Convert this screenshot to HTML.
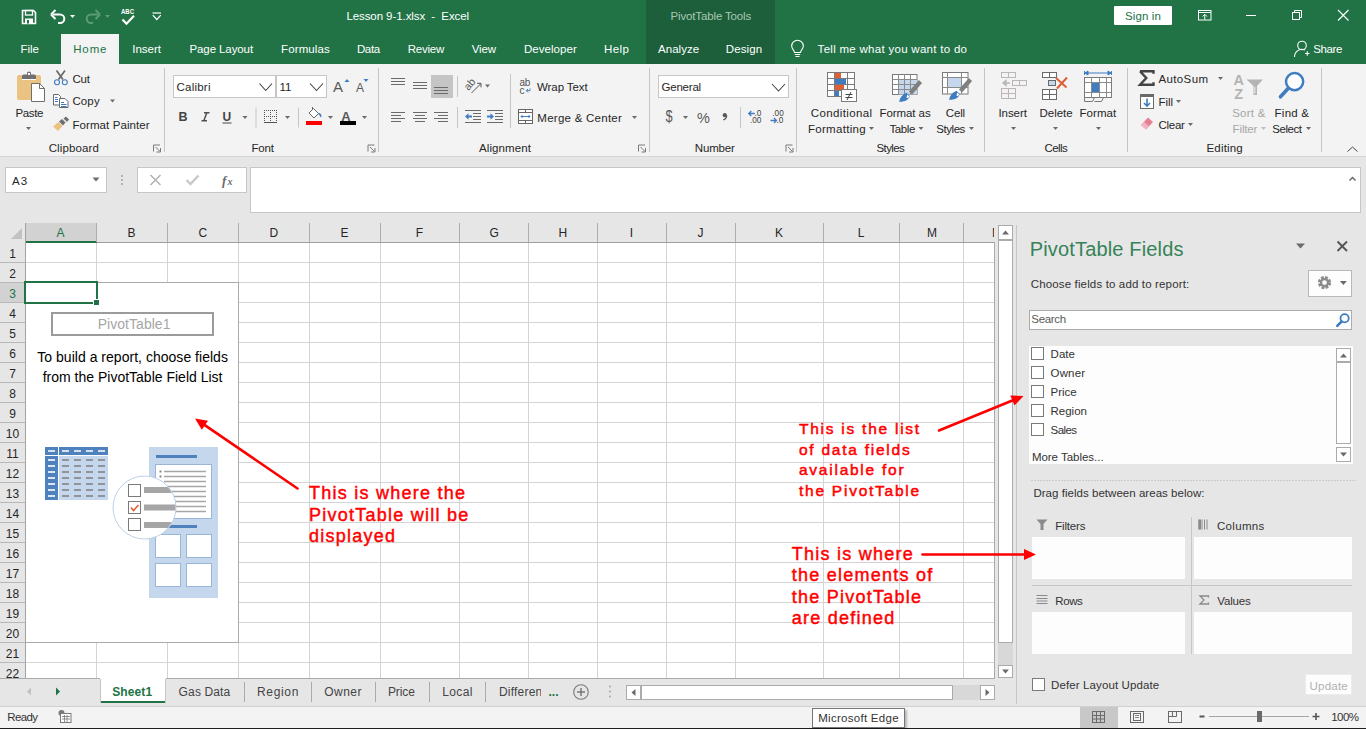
<!DOCTYPE html><html><head><meta charset="utf-8"><style>
html,body{margin:0;padding:0;}
body{width:1366px;height:729px;position:relative;overflow:hidden;background:#e6e6e6;font-family:"Liberation Sans",sans-serif;}
.t{position:absolute;white-space:pre;line-height:1;}
.r{position:absolute;box-sizing:border-box;}
.s{position:absolute;overflow:visible;}
</style></head><body>
<div class="r" style="left:0px;top:0px;width:1366px;height:64px;background:#217346;"></div>
<div class="r" style="left:646px;top:0px;width:129px;height:64px;background:#1c5f3a;"></div>
<div class="t" style="left:346.4px;top:11px;font-size:11.5px;color:#ffffff;font-weight:normal;letter-spacing:-0.078px;font-family:'Liberation Sans', sans-serif;">Lesson 9-1.xlsx  -  Excel</div>
<div class="t" style="left:670.5px;top:11px;font-size:11.5px;color:#a9c7b5;font-weight:normal;letter-spacing:-0.143px;font-family:'Liberation Sans', sans-serif;">PivotTable Tools</div>
<div class="r" style="left:1114px;top:6px;width:58px;height:19px;background:#ffffff;border-radius:1px"></div>
<div class="t" style="left:1125px;top:11px;font-size:11.5px;color:#217346;font-weight:normal;letter-spacing:0.106px;font-family:'Liberation Sans', sans-serif;">Sign in</div>
<div class="r" style="left:61px;top:34px;width:58px;height:31px;background:#f3f3f3;"></div>
<div class="t" style="left:20.5px;top:44px;font-size:11.5px;color:#ffffff;font-weight:normal;letter-spacing:-0.078px;font-family:'Liberation Sans', sans-serif;">File</div>
<div class="t" style="left:73.2px;top:44px;font-size:11.5px;color:#217346;font-weight:normal;letter-spacing:0.873px;font-family:'Liberation Sans', sans-serif;">Home</div>
<div class="t" style="left:132.2px;top:44px;font-size:11.5px;color:#ffffff;font-weight:normal;letter-spacing:0.007px;font-family:'Liberation Sans', sans-serif;">Insert</div>
<div class="t" style="left:189.5px;top:44px;font-size:11.5px;color:#ffffff;font-weight:normal;letter-spacing:-0.099px;font-family:'Liberation Sans', sans-serif;">Page Layout</div>
<div class="t" style="left:281.1px;top:44px;font-size:11.5px;color:#ffffff;font-weight:normal;letter-spacing:0.103px;font-family:'Liberation Sans', sans-serif;">Formulas</div>
<div class="t" style="left:356.9px;top:44px;font-size:11.5px;color:#ffffff;font-weight:normal;letter-spacing:-0.332px;font-family:'Liberation Sans', sans-serif;">Data</div>
<div class="t" style="left:407.8px;top:44px;font-size:11.5px;color:#ffffff;font-weight:normal;letter-spacing:-0.24px;font-family:'Liberation Sans', sans-serif;">Review</div>
<div class="t" style="left:471.8px;top:44px;font-size:11.5px;color:#ffffff;font-weight:normal;letter-spacing:-0.171px;font-family:'Liberation Sans', sans-serif;">View</div>
<div class="t" style="left:524px;top:44px;font-size:11.5px;color:#ffffff;font-weight:normal;letter-spacing:0.039px;font-family:'Liberation Sans', sans-serif;">Developer</div>
<div class="t" style="left:604px;top:44px;font-size:11.5px;color:#ffffff;font-weight:normal;letter-spacing:0.415px;font-family:'Liberation Sans', sans-serif;">Help</div>
<div class="t" style="left:658px;top:44px;font-size:11.5px;color:#ffffff;font-weight:normal;letter-spacing:0.047px;font-family:'Liberation Sans', sans-serif;">Analyze</div>
<div class="t" style="left:725.8px;top:44px;font-size:11.5px;color:#ffffff;font-weight:normal;letter-spacing:0.1px;font-family:'Liberation Sans', sans-serif;">Design</div>
<div class="t" style="left:817.6px;top:44px;font-size:11.5px;color:#ffffff;font-weight:normal;letter-spacing:0.288px;font-family:'Liberation Sans', sans-serif;">Tell me what you want to do</div>
<div class="t" style="left:1313.2px;top:44px;font-size:11.5px;color:#ffffff;font-weight:normal;letter-spacing:-0.373px;font-family:'Liberation Sans', sans-serif;">Share</div>
<div class="r" style="left:0px;top:64px;width:1366px;height:92px;background:#f3f3f3;"></div>
<div class="r" style="left:0px;top:156px;width:1366px;height:1px;background:#d5d5d5;"></div>
<div class="r" style="left:164px;top:68px;width:1px;height:84px;background:#c6c6c6;"></div>
<div class="r" style="left:378px;top:68px;width:1px;height:84px;background:#c6c6c6;"></div>
<div class="r" style="left:649px;top:68px;width:1px;height:84px;background:#c6c6c6;"></div>
<div class="r" style="left:796px;top:68px;width:1px;height:84px;background:#c6c6c6;"></div>
<div class="r" style="left:984px;top:68px;width:1px;height:84px;background:#c6c6c6;"></div>
<div class="r" style="left:1127px;top:68px;width:1px;height:84px;background:#c6c6c6;"></div>
<div class="r" style="left:1321px;top:68px;width:1px;height:84px;background:#c6c6c6;"></div>
<div class="t" style="left:48.7px;top:143px;font-size:11.5px;color:#262626;font-weight:normal;letter-spacing:0.122px;font-family:'Liberation Sans', sans-serif;">Clipboard</div>
<div class="t" style="left:251.5px;top:143px;font-size:11.5px;color:#262626;font-weight:normal;letter-spacing:-0.205px;font-family:'Liberation Sans', sans-serif;">Font</div>
<div class="t" style="left:479px;top:143px;font-size:11.5px;color:#262626;font-weight:normal;letter-spacing:0.107px;font-family:'Liberation Sans', sans-serif;">Alignment</div>
<div class="t" style="left:694.8px;top:143px;font-size:11.5px;color:#262626;font-weight:normal;letter-spacing:-0.174px;font-family:'Liberation Sans', sans-serif;">Number</div>
<div class="t" style="left:876.5px;top:143px;font-size:11.5px;color:#262626;font-weight:normal;letter-spacing:-0.6px;font-family:'Liberation Sans', sans-serif;">Styles</div>
<div class="t" style="left:1044.6px;top:143px;font-size:11.5px;color:#262626;font-weight:normal;letter-spacing:-0.6px;font-family:'Liberation Sans', sans-serif;">Cells</div>
<div class="t" style="left:1206.5px;top:143px;font-size:11.5px;color:#262626;font-weight:normal;letter-spacing:0.172px;font-family:'Liberation Sans', sans-serif;">Editing</div>
<div class="t" style="left:15.5px;top:108px;font-size:11.5px;color:#262626;font-weight:normal;letter-spacing:-0.378px;font-family:'Liberation Sans', sans-serif;">Paste</div>
<div class="t" style="left:72.4px;top:74px;font-size:11.5px;color:#262626;font-weight:normal;letter-spacing:-0.15px;font-family:'Liberation Sans', sans-serif;">Cut</div>
<div class="t" style="left:72.4px;top:96px;font-size:11.5px;color:#262626;font-weight:normal;letter-spacing:0.135px;font-family:'Liberation Sans', sans-serif;">Copy</div>
<div class="t" style="left:72.4px;top:120px;font-size:11.5px;color:#262626;font-weight:normal;letter-spacing:0.091px;font-family:'Liberation Sans', sans-serif;">Format Painter</div>
<div class="r" style="left:173px;top:75px;width:103px;height:23px;background:#ffffff;border:1px solid #c6c6c6"></div>
<div class="r" style="left:276px;top:75px;width:51px;height:23px;background:#ffffff;border:1px solid #c6c6c6"></div>
<div class="t" style="left:176.6px;top:82px;font-size:11.5px;color:#262626;font-weight:normal;letter-spacing:0.211px;font-family:'Liberation Sans', sans-serif;">Calibri</div>
<div class="t" style="left:279.5px;top:82px;font-size:11.5px;color:#262626;font-weight:normal;letter-spacing:0px;font-family:'Liberation Sans', sans-serif;">11</div>
<div class="t" style="left:537px;top:82px;font-size:11.5px;color:#262626;font-weight:normal;letter-spacing:-0.082px;font-family:'Liberation Sans', sans-serif;">Wrap Text</div>
<div class="t" style="left:537.3px;top:113px;font-size:11.5px;color:#262626;font-weight:normal;letter-spacing:0.258px;font-family:'Liberation Sans', sans-serif;">Merge &amp; Center</div>
<div class="r" style="left:658px;top:75px;width:131px;height:23px;background:#ffffff;border:1px solid #c6c6c6"></div>
<div class="t" style="left:661.5px;top:82px;font-size:11.5px;color:#262626;font-weight:normal;letter-spacing:-0.21px;font-family:'Liberation Sans', sans-serif;">General</div>
<div class="t" style="left:810.8px;top:108px;font-size:11.5px;color:#262626;font-weight:normal;letter-spacing:0.362px;font-family:'Liberation Sans', sans-serif;">Conditional</div>
<div class="t" style="left:807.9px;top:124px;font-size:11.5px;color:#262626;font-weight:normal;letter-spacing:0.315px;font-family:'Liberation Sans', sans-serif;">Formatting</div>
<div class="t" style="left:879.6px;top:108px;font-size:11.5px;color:#262626;font-weight:normal;letter-spacing:-0.089px;font-family:'Liberation Sans', sans-serif;">Format as</div>
<div class="t" style="left:889.4px;top:124px;font-size:11.5px;color:#262626;font-weight:normal;letter-spacing:-0.374px;font-family:'Liberation Sans', sans-serif;">Table</div>
<div class="t" style="left:945.8px;top:108px;font-size:11.5px;color:#262626;font-weight:normal;letter-spacing:-0.185px;font-family:'Liberation Sans', sans-serif;">Cell</div>
<div class="t" style="left:936.3px;top:124px;font-size:11.5px;color:#262626;font-weight:normal;letter-spacing:-0.453px;font-family:'Liberation Sans', sans-serif;">Styles</div>
<div class="t" style="left:998.5px;top:108px;font-size:11.5px;color:#262626;font-weight:normal;letter-spacing:-0.073px;font-family:'Liberation Sans', sans-serif;">Insert</div>
<div class="t" style="left:1039.5px;top:108px;font-size:11.5px;color:#262626;font-weight:normal;letter-spacing:-0.029px;font-family:'Liberation Sans', sans-serif;">Delete</div>
<div class="t" style="left:1079.5px;top:108px;font-size:11.5px;color:#262626;font-weight:normal;letter-spacing:0.055px;font-family:'Liberation Sans', sans-serif;">Format</div>
<div class="t" style="left:1158.5px;top:74px;font-size:11.5px;color:#262626;font-weight:normal;letter-spacing:0.363px;font-family:'Liberation Sans', sans-serif;">AutoSum</div>
<div class="t" style="left:1158.5px;top:97px;font-size:11.5px;color:#262626;font-weight:normal;letter-spacing:-0.012px;font-family:'Liberation Sans', sans-serif;">Fill</div>
<div class="t" style="left:1158.5px;top:120px;font-size:11.5px;color:#262626;font-weight:normal;letter-spacing:-0.288px;font-family:'Liberation Sans', sans-serif;">Clear</div>
<div class="t" style="left:1232.2px;top:108px;font-size:11.5px;color:#a6a6a6;font-weight:normal;letter-spacing:0.243px;font-family:'Liberation Sans', sans-serif;">Sort &amp;</div>
<div class="t" style="left:1232.6px;top:124px;font-size:11.5px;color:#a6a6a6;font-weight:normal;letter-spacing:-0.145px;font-family:'Liberation Sans', sans-serif;">Filter</div>
<div class="t" style="left:1274.6px;top:108px;font-size:11.5px;color:#262626;font-weight:normal;letter-spacing:0.227px;font-family:'Liberation Sans', sans-serif;">Find &amp;</div>
<div class="t" style="left:1272.3px;top:124px;font-size:11.5px;color:#262626;font-weight:normal;letter-spacing:-0.453px;font-family:'Liberation Sans', sans-serif;">Select</div>
<div class="r" style="left:0px;top:157px;width:1366px;height:66px;background:#e6e6e6;"></div>
<div class="r" style="left:5px;top:167px;width:102px;height:26px;background:#ffffff;border:1px solid #c6c6c6"></div>
<div class="t" style="left:11.9px;top:176px;font-size:11.5px;color:#262626;font-weight:normal;letter-spacing:1.2px;font-family:'Liberation Sans', sans-serif;">A3</div>
<div class="r" style="left:137px;top:167px;width:110px;height:26px;background:#ffffff;border:1px solid #c6c6c6"></div>
<div class="r" style="left:250px;top:167px;width:1111px;height:46px;background:#ffffff;border:1px solid #c6c6c6"></div>
<div class="r" style="left:0px;top:223px;width:1016px;height:455px;background:#e6e6e6;"></div>
<div class="r" style="left:25px;top:243px;width:969px;height:435px;background:#ffffff;"></div>
<div class="r" style="left:96px;top:243px;width:1px;height:435px;background:#d4d4d4;"></div>
<div class="r" style="left:167px;top:243px;width:1px;height:435px;background:#d4d4d4;"></div>
<div class="r" style="left:238px;top:243px;width:1px;height:435px;background:#d4d4d4;"></div>
<div class="r" style="left:309px;top:243px;width:1px;height:435px;background:#d4d4d4;"></div>
<div class="r" style="left:380px;top:243px;width:1px;height:435px;background:#d4d4d4;"></div>
<div class="r" style="left:459px;top:243px;width:1px;height:435px;background:#d4d4d4;"></div>
<div class="r" style="left:528px;top:243px;width:1px;height:435px;background:#d4d4d4;"></div>
<div class="r" style="left:597px;top:243px;width:1px;height:435px;background:#d4d4d4;"></div>
<div class="r" style="left:666px;top:243px;width:1px;height:435px;background:#d4d4d4;"></div>
<div class="r" style="left:735px;top:243px;width:1px;height:435px;background:#d4d4d4;"></div>
<div class="r" style="left:823px;top:243px;width:1px;height:435px;background:#d4d4d4;"></div>
<div class="r" style="left:899px;top:243px;width:1px;height:435px;background:#d4d4d4;"></div>
<div class="r" style="left:963px;top:243px;width:1px;height:435px;background:#d4d4d4;"></div>
<div class="r" style="left:25px;top:262px;width:969px;height:1px;background:#d4d4d4;"></div>
<div class="r" style="left:25px;top:282px;width:969px;height:1px;background:#d4d4d4;"></div>
<div class="r" style="left:25px;top:302px;width:969px;height:1px;background:#d4d4d4;"></div>
<div class="r" style="left:25px;top:322px;width:969px;height:1px;background:#d4d4d4;"></div>
<div class="r" style="left:25px;top:342px;width:969px;height:1px;background:#d4d4d4;"></div>
<div class="r" style="left:25px;top:362px;width:969px;height:1px;background:#d4d4d4;"></div>
<div class="r" style="left:25px;top:382px;width:969px;height:1px;background:#d4d4d4;"></div>
<div class="r" style="left:25px;top:402px;width:969px;height:1px;background:#d4d4d4;"></div>
<div class="r" style="left:25px;top:422px;width:969px;height:1px;background:#d4d4d4;"></div>
<div class="r" style="left:25px;top:442px;width:969px;height:1px;background:#d4d4d4;"></div>
<div class="r" style="left:25px;top:462px;width:969px;height:1px;background:#d4d4d4;"></div>
<div class="r" style="left:25px;top:482px;width:969px;height:1px;background:#d4d4d4;"></div>
<div class="r" style="left:25px;top:502px;width:969px;height:1px;background:#d4d4d4;"></div>
<div class="r" style="left:25px;top:522px;width:969px;height:1px;background:#d4d4d4;"></div>
<div class="r" style="left:25px;top:542px;width:969px;height:1px;background:#d4d4d4;"></div>
<div class="r" style="left:25px;top:562px;width:969px;height:1px;background:#d4d4d4;"></div>
<div class="r" style="left:25px;top:582px;width:969px;height:1px;background:#d4d4d4;"></div>
<div class="r" style="left:25px;top:602px;width:969px;height:1px;background:#d4d4d4;"></div>
<div class="r" style="left:25px;top:622px;width:969px;height:1px;background:#d4d4d4;"></div>
<div class="r" style="left:25px;top:642px;width:969px;height:1px;background:#d4d4d4;"></div>
<div class="r" style="left:25px;top:662px;width:969px;height:1px;background:#d4d4d4;"></div>
<div class="r" style="left:25px;top:242px;width:970px;height:1px;background:#9f9f9f;"></div>
<div class="r" style="left:25px;top:223px;width:72px;height:19px;background:#d2d2d2;"></div>
<div class="r" style="left:25px;top:241px;width:72px;height:2px;background:#217346;"></div>
<div class="r" style="left:96px;top:223px;width:1px;height:19px;background:#adadad;"></div>
<div class="t" style="left:56.5px;top:227px;font-size:12px;color:#217346;font-weight:normal;letter-spacing:0px;font-family:'Liberation Sans', sans-serif;width:8px;text-align:center">A</div>
<div class="r" style="left:167px;top:223px;width:1px;height:19px;background:#adadad;"></div>
<div class="t" style="left:127.5px;top:227px;font-size:12px;color:#262626;font-weight:normal;letter-spacing:0px;font-family:'Liberation Sans', sans-serif;width:8px;text-align:center">B</div>
<div class="r" style="left:238px;top:223px;width:1px;height:19px;background:#adadad;"></div>
<div class="t" style="left:198.5px;top:227px;font-size:12px;color:#262626;font-weight:normal;letter-spacing:0px;font-family:'Liberation Sans', sans-serif;width:8px;text-align:center">C</div>
<div class="r" style="left:309px;top:223px;width:1px;height:19px;background:#adadad;"></div>
<div class="t" style="left:269.5px;top:227px;font-size:12px;color:#262626;font-weight:normal;letter-spacing:0px;font-family:'Liberation Sans', sans-serif;width:8px;text-align:center">D</div>
<div class="r" style="left:380px;top:223px;width:1px;height:19px;background:#adadad;"></div>
<div class="t" style="left:340.5px;top:227px;font-size:12px;color:#262626;font-weight:normal;letter-spacing:0px;font-family:'Liberation Sans', sans-serif;width:8px;text-align:center">E</div>
<div class="r" style="left:459px;top:223px;width:1px;height:19px;background:#adadad;"></div>
<div class="t" style="left:415.5px;top:227px;font-size:12px;color:#262626;font-weight:normal;letter-spacing:0px;font-family:'Liberation Sans', sans-serif;width:8px;text-align:center">F</div>
<div class="r" style="left:528px;top:223px;width:1px;height:19px;background:#adadad;"></div>
<div class="t" style="left:489.5px;top:227px;font-size:12px;color:#262626;font-weight:normal;letter-spacing:0px;font-family:'Liberation Sans', sans-serif;width:8px;text-align:center">G</div>
<div class="r" style="left:597px;top:223px;width:1px;height:19px;background:#adadad;"></div>
<div class="t" style="left:558.5px;top:227px;font-size:12px;color:#262626;font-weight:normal;letter-spacing:0px;font-family:'Liberation Sans', sans-serif;width:8px;text-align:center">H</div>
<div class="r" style="left:666px;top:223px;width:1px;height:19px;background:#adadad;"></div>
<div class="t" style="left:627.5px;top:227px;font-size:12px;color:#262626;font-weight:normal;letter-spacing:0px;font-family:'Liberation Sans', sans-serif;width:8px;text-align:center">I</div>
<div class="r" style="left:735px;top:223px;width:1px;height:19px;background:#adadad;"></div>
<div class="t" style="left:696.5px;top:227px;font-size:12px;color:#262626;font-weight:normal;letter-spacing:0px;font-family:'Liberation Sans', sans-serif;width:8px;text-align:center">J</div>
<div class="r" style="left:823px;top:223px;width:1px;height:19px;background:#adadad;"></div>
<div class="t" style="left:775.0px;top:227px;font-size:12px;color:#262626;font-weight:normal;letter-spacing:0px;font-family:'Liberation Sans', sans-serif;width:8px;text-align:center">K</div>
<div class="r" style="left:899px;top:223px;width:1px;height:19px;background:#adadad;"></div>
<div class="t" style="left:857.0px;top:227px;font-size:12px;color:#262626;font-weight:normal;letter-spacing:0px;font-family:'Liberation Sans', sans-serif;width:8px;text-align:center">L</div>
<div class="r" style="left:963px;top:223px;width:1px;height:19px;background:#adadad;"></div>
<div class="t" style="left:927.0px;top:227px;font-size:12px;color:#262626;font-weight:normal;letter-spacing:0px;font-family:'Liberation Sans', sans-serif;width:8px;text-align:center">M</div>
<div class="r" style="left:25px;top:223px;width:1px;height:455px;background:#a3a3a3;"></div>
<div class="r" style="left:0px;top:262px;width:25px;height:1px;background:#b8b8b8;"></div>
<div class="t" style="left:0px;top:248px;font-size:12px;color:#262626;font-weight:normal;letter-spacing:0px;font-family:'Liberation Sans', sans-serif;width:25px;text-align:center">1</div>
<div class="r" style="left:0px;top:282px;width:25px;height:1px;background:#b8b8b8;"></div>
<div class="t" style="left:0px;top:268px;font-size:12px;color:#262626;font-weight:normal;letter-spacing:0px;font-family:'Liberation Sans', sans-serif;width:25px;text-align:center">2</div>
<div class="r" style="left:0px;top:302px;width:25px;height:1px;background:#b8b8b8;"></div>
<div class="t" style="left:0px;top:288px;font-size:12px;color:#217346;font-weight:normal;letter-spacing:0px;font-family:'Liberation Sans', sans-serif;width:25px;text-align:center">3</div>
<div class="r" style="left:0px;top:322px;width:25px;height:1px;background:#b8b8b8;"></div>
<div class="t" style="left:0px;top:308px;font-size:12px;color:#262626;font-weight:normal;letter-spacing:0px;font-family:'Liberation Sans', sans-serif;width:25px;text-align:center">4</div>
<div class="r" style="left:0px;top:342px;width:25px;height:1px;background:#b8b8b8;"></div>
<div class="t" style="left:0px;top:328px;font-size:12px;color:#262626;font-weight:normal;letter-spacing:0px;font-family:'Liberation Sans', sans-serif;width:25px;text-align:center">5</div>
<div class="r" style="left:0px;top:362px;width:25px;height:1px;background:#b8b8b8;"></div>
<div class="t" style="left:0px;top:348px;font-size:12px;color:#262626;font-weight:normal;letter-spacing:0px;font-family:'Liberation Sans', sans-serif;width:25px;text-align:center">6</div>
<div class="r" style="left:0px;top:382px;width:25px;height:1px;background:#b8b8b8;"></div>
<div class="t" style="left:0px;top:368px;font-size:12px;color:#262626;font-weight:normal;letter-spacing:0px;font-family:'Liberation Sans', sans-serif;width:25px;text-align:center">7</div>
<div class="r" style="left:0px;top:402px;width:25px;height:1px;background:#b8b8b8;"></div>
<div class="t" style="left:0px;top:388px;font-size:12px;color:#262626;font-weight:normal;letter-spacing:0px;font-family:'Liberation Sans', sans-serif;width:25px;text-align:center">8</div>
<div class="r" style="left:0px;top:422px;width:25px;height:1px;background:#b8b8b8;"></div>
<div class="t" style="left:0px;top:408px;font-size:12px;color:#262626;font-weight:normal;letter-spacing:0px;font-family:'Liberation Sans', sans-serif;width:25px;text-align:center">9</div>
<div class="r" style="left:0px;top:442px;width:25px;height:1px;background:#b8b8b8;"></div>
<div class="t" style="left:0px;top:428px;font-size:12px;color:#262626;font-weight:normal;letter-spacing:0px;font-family:'Liberation Sans', sans-serif;width:25px;text-align:center">10</div>
<div class="r" style="left:0px;top:462px;width:25px;height:1px;background:#b8b8b8;"></div>
<div class="t" style="left:0px;top:448px;font-size:12px;color:#262626;font-weight:normal;letter-spacing:0px;font-family:'Liberation Sans', sans-serif;width:25px;text-align:center">11</div>
<div class="r" style="left:0px;top:482px;width:25px;height:1px;background:#b8b8b8;"></div>
<div class="t" style="left:0px;top:468px;font-size:12px;color:#262626;font-weight:normal;letter-spacing:0px;font-family:'Liberation Sans', sans-serif;width:25px;text-align:center">12</div>
<div class="r" style="left:0px;top:502px;width:25px;height:1px;background:#b8b8b8;"></div>
<div class="t" style="left:0px;top:488px;font-size:12px;color:#262626;font-weight:normal;letter-spacing:0px;font-family:'Liberation Sans', sans-serif;width:25px;text-align:center">13</div>
<div class="r" style="left:0px;top:522px;width:25px;height:1px;background:#b8b8b8;"></div>
<div class="t" style="left:0px;top:508px;font-size:12px;color:#262626;font-weight:normal;letter-spacing:0px;font-family:'Liberation Sans', sans-serif;width:25px;text-align:center">14</div>
<div class="r" style="left:0px;top:542px;width:25px;height:1px;background:#b8b8b8;"></div>
<div class="t" style="left:0px;top:528px;font-size:12px;color:#262626;font-weight:normal;letter-spacing:0px;font-family:'Liberation Sans', sans-serif;width:25px;text-align:center">15</div>
<div class="r" style="left:0px;top:562px;width:25px;height:1px;background:#b8b8b8;"></div>
<div class="t" style="left:0px;top:548px;font-size:12px;color:#262626;font-weight:normal;letter-spacing:0px;font-family:'Liberation Sans', sans-serif;width:25px;text-align:center">16</div>
<div class="r" style="left:0px;top:582px;width:25px;height:1px;background:#b8b8b8;"></div>
<div class="t" style="left:0px;top:568px;font-size:12px;color:#262626;font-weight:normal;letter-spacing:0px;font-family:'Liberation Sans', sans-serif;width:25px;text-align:center">17</div>
<div class="r" style="left:0px;top:602px;width:25px;height:1px;background:#b8b8b8;"></div>
<div class="t" style="left:0px;top:588px;font-size:12px;color:#262626;font-weight:normal;letter-spacing:0px;font-family:'Liberation Sans', sans-serif;width:25px;text-align:center">18</div>
<div class="r" style="left:0px;top:622px;width:25px;height:1px;background:#b8b8b8;"></div>
<div class="t" style="left:0px;top:608px;font-size:12px;color:#262626;font-weight:normal;letter-spacing:0px;font-family:'Liberation Sans', sans-serif;width:25px;text-align:center">19</div>
<div class="r" style="left:0px;top:642px;width:25px;height:1px;background:#b8b8b8;"></div>
<div class="t" style="left:0px;top:628px;font-size:12px;color:#262626;font-weight:normal;letter-spacing:0px;font-family:'Liberation Sans', sans-serif;width:25px;text-align:center">20</div>
<div class="r" style="left:0px;top:662px;width:25px;height:1px;background:#b8b8b8;"></div>
<div class="t" style="left:0px;top:648px;font-size:12px;color:#262626;font-weight:normal;letter-spacing:0px;font-family:'Liberation Sans', sans-serif;width:25px;text-align:center">21</div>
<div class="r" style="left:0px;top:682px;width:25px;height:1px;background:#b8b8b8;"></div>
<div class="t" style="left:0px;top:668px;font-size:12px;color:#262626;font-weight:normal;letter-spacing:0px;font-family:'Liberation Sans', sans-serif;width:25px;text-align:center">22</div>
<div class="r" style="left:0px;top:283px;width:25px;height:19px;background:#d2d2d2;"></div>
<div class="t" style="left:0px;top:288px;font-size:12px;color:#217346;font-weight:normal;letter-spacing:0px;font-family:'Liberation Sans', sans-serif;width:25px;text-align:center">3</div>
<div style="position:absolute;left:963px;top:223px;width:31px;height:19px;overflow:hidden"><div class="t" style="left:29px;top:4px;font-size:12px;color:#262626">N</div></div>
<div class="r" style="left:994px;top:242px;width:1px;height:436px;background:#ababab;"></div>
<div class="r" style="left:26px;top:283px;width:212px;height:359px;background:#ffffff;"></div>
<div class="r" style="left:96px;top:282px;width:143px;height:1px;background:#ababab;"></div>
<div class="r" style="left:238px;top:282px;width:1px;height:361px;background:#ababab;"></div>
<div class="r" style="left:25px;top:642px;width:214px;height:1px;background:#ababab;"></div>
<div class="r" style="left:24px;top:281px;width:74px;height:23px;background:none;border:2px solid #217346"></div>
<div class="r" style="left:93px;top:299px;width:7px;height:7px;background:#ffffff;"></div>
<div class="r" style="left:94px;top:300px;width:5px;height:5px;background:#217346;"></div>
<div class="r" style="left:51px;top:312px;width:163px;height:24px;background:#ffffff;border:2px solid #9b9b9b"></div>
<div class="t" style="left:97.7px;top:317px;font-size:14px;color:#a6a6a6;font-weight:normal;letter-spacing:0.041px;font-family:'Liberation Sans', sans-serif;">PivotTable1</div>
<div class="t" style="left:37.3px;top:350px;font-size:14px;color:#000000;font-weight:normal;letter-spacing:0.023px;font-family:'Liberation Sans', sans-serif;">To build a report, choose fields</div>
<div class="t" style="left:42.7px;top:370px;font-size:14px;color:#000000;font-weight:normal;letter-spacing:0.002px;font-family:'Liberation Sans', sans-serif;">from the PivotTable Field List</div>
<div class="r" style="left:0px;top:678px;width:1016px;height:28px;background:#e6e6e6;"></div>
<div class="r" style="left:0px;top:678px;width:995px;height:1px;background:#ababab;"></div>
<div class="r" style="left:100px;top:678px;width:66px;height:25px;background:#ffffff;"></div>
<div class="r" style="left:100px;top:701px;width:66px;height:2px;background:#217346;"></div>
<div class="t" style="left:112.2px;top:686px;font-size:12px;color:#217346;font-weight:bold;letter-spacing:0.124px;font-family:'Liberation Sans', sans-serif;">Sheet1</div>
<div class="t" style="left:178.6px;top:686px;font-size:12px;color:#444444;font-weight:normal;letter-spacing:0.141px;font-family:'Liberation Sans', sans-serif;">Gas Data</div>
<div class="t" style="left:257px;top:686px;font-size:12px;color:#444444;font-weight:normal;letter-spacing:0.669px;font-family:'Liberation Sans', sans-serif;">Region</div>
<div class="t" style="left:324.3px;top:686px;font-size:12px;color:#444444;font-weight:normal;letter-spacing:0.463px;font-family:'Liberation Sans', sans-serif;">Owner</div>
<div class="t" style="left:387.9px;top:686px;font-size:12px;color:#444444;font-weight:normal;letter-spacing:-0.067px;font-family:'Liberation Sans', sans-serif;">Price</div>
<div class="t" style="left:442.2px;top:686px;font-size:12px;color:#444444;font-weight:normal;letter-spacing:0.37px;font-family:'Liberation Sans', sans-serif;">Local</div>
<div class="r" style="left:244px;top:682px;width:1px;height:20px;background:#ababab;"></div>
<div class="r" style="left:311px;top:682px;width:1px;height:20px;background:#ababab;"></div>
<div class="r" style="left:375px;top:682px;width:1px;height:20px;background:#ababab;"></div>
<div class="r" style="left:429px;top:682px;width:1px;height:20px;background:#ababab;"></div>
<div class="r" style="left:485px;top:682px;width:1px;height:20px;background:#ababab;"></div>
<div style="position:absolute;left:499px;top:682px;width:42px;height:20px;overflow:hidden"><div class="t" style="left:0;top:4px;font-size:12px;color:#444444;letter-spacing:0.2px">Different</div></div>
<div class="t" style="left:548.5px;top:686px;font-size:12px;color:#217346;font-weight:bold;letter-spacing:0px;font-family:'Liberation Sans', sans-serif;">...</div>
<div class="r" style="left:100px;top:679px;width:1px;height:24px;background:#c6c6c6;"></div>
<div class="r" style="left:165px;top:679px;width:1px;height:24px;background:#c6c6c6;"></div>
<div class="r" style="left:626px;top:685px;width:369px;height:15px;background:#d8d8d8;"></div>
<div class="r" style="left:626px;top:685px;width:15px;height:15px;background:#ffffff;border:1px solid #ababab"></div>
<div class="r" style="left:641px;top:685px;width:312px;height:15px;background:#ffffff;border:1px solid #ababab"></div>
<div class="r" style="left:980px;top:685px;width:15px;height:15px;background:#ffffff;border:1px solid #ababab"></div>
<div class="r" style="left:998px;top:225px;width:15px;height:453px;background:#d8d8d8;"></div>
<div class="r" style="left:998px;top:225px;width:15px;height:15px;background:#ffffff;border:1px solid #ababab"></div>
<div class="r" style="left:998px;top:240px;width:15px;height:403px;background:#ffffff;border:1px solid #ababab"></div>
<div class="r" style="left:998px;top:665px;width:15px;height:13px;background:#ffffff;border:1px solid #ababab"></div>
<div class="r" style="left:1016px;top:225px;width:1px;height:479px;background:#c6c6c6;"></div>
<div class="t" style="left:1029.7px;top:239px;font-size:20px;color:#358357;font-weight:normal;letter-spacing:0.164px;font-family:'Liberation Sans', sans-serif;">PivotTable Fields</div>
<div class="t" style="left:1030.7px;top:279px;font-size:11.5px;color:#333333;font-weight:normal;letter-spacing:0.148px;font-family:'Liberation Sans', sans-serif;">Choose fields to add to report:</div>
<div class="r" style="left:1308px;top:270px;width:44px;height:27px;background:#fdfdfd;border:1px solid #b9b9b9"></div>
<div class="r" style="left:1029px;top:310px;width:323px;height:20px;background:#ffffff;border:1px solid #ababab"></div>
<div class="t" style="left:1031.3px;top:314px;font-size:11.5px;color:#5a5a5a;font-weight:normal;letter-spacing:-0.328px;font-family:'Liberation Sans', sans-serif;">Search</div>
<div class="r" style="left:1029px;top:346px;width:324px;height:118px;background:#fdfdfd;"></div>
<div class="r" style="left:1031px;top:347px;width:13px;height:13px;background:#ffffff;border:1px solid #7a7a7a"></div>
<div class="t" style="left:1050.6px;top:349px;font-size:11.5px;color:#333333;font-weight:normal;letter-spacing:0.001px;font-family:'Liberation Sans', sans-serif;">Date</div>
<div class="r" style="left:1031px;top:366px;width:13px;height:13px;background:#ffffff;border:1px solid #7a7a7a"></div>
<div class="t" style="left:1050.6px;top:368px;font-size:11.5px;color:#333333;font-weight:normal;letter-spacing:0.14px;font-family:'Liberation Sans', sans-serif;">Owner</div>
<div class="r" style="left:1031px;top:385px;width:13px;height:13px;background:#ffffff;border:1px solid #7a7a7a"></div>
<div class="t" style="left:1050.6px;top:387px;font-size:11.5px;color:#333333;font-weight:normal;letter-spacing:-0.026px;font-family:'Liberation Sans', sans-serif;">Price</div>
<div class="r" style="left:1031px;top:404px;width:13px;height:13px;background:#ffffff;border:1px solid #7a7a7a"></div>
<div class="t" style="left:1050.6px;top:406px;font-size:11.5px;color:#333333;font-weight:normal;letter-spacing:-0.029px;font-family:'Liberation Sans', sans-serif;">Region</div>
<div class="r" style="left:1031px;top:423px;width:13px;height:13px;background:#ffffff;border:1px solid #7a7a7a"></div>
<div class="t" style="left:1050.6px;top:425px;font-size:11.5px;color:#333333;font-weight:normal;letter-spacing:-0.6px;font-family:'Liberation Sans', sans-serif;">Sales</div>
<div class="t" style="left:1031.9px;top:452px;font-size:11.5px;color:#333333;font-weight:normal;letter-spacing:-0.025px;font-family:'Liberation Sans', sans-serif;">More Tables...</div>
<div class="r" style="left:1336px;top:348px;width:15px;height:14px;background:#ffffff;border:1px solid #ababab"></div>
<div class="r" style="left:1336px;top:362px;width:15px;height:82px;background:#ffffff;border:1px solid #ababab"></div>
<div class="r" style="left:1336px;top:447px;width:15px;height:15px;background:#ffffff;border:1px solid #ababab"></div>
<div class="t" style="left:1033.4px;top:488px;font-size:11.5px;color:#333333;font-weight:normal;letter-spacing:0.034px;font-family:'Liberation Sans', sans-serif;">Drag fields between areas below:</div>
<div class="r" style="left:1032px;top:537px;width:153px;height:42px;background:#fdfdfd;"></div>
<div class="r" style="left:1194px;top:537px;width:158px;height:42px;background:#fdfdfd;"></div>
<div class="r" style="left:1032px;top:612px;width:153px;height:42px;background:#fdfdfd;"></div>
<div class="r" style="left:1194px;top:612px;width:158px;height:42px;background:#fdfdfd;"></div>
<div class="r" style="left:1191px;top:517px;width:1px;height:137px;background:#c6c6c6;"></div>
<div class="r" style="left:1032px;top:585px;width:320px;height:1px;background:#c6c6c6;"></div>
<div class="t" style="left:1055.2px;top:521px;font-size:11.5px;color:#333333;font-weight:normal;letter-spacing:-0.176px;font-family:'Liberation Sans', sans-serif;">Filters</div>
<div class="t" style="left:1217px;top:521px;font-size:11.5px;color:#333333;font-weight:normal;letter-spacing:0.312px;font-family:'Liberation Sans', sans-serif;">Columns</div>
<div class="t" style="left:1055.3px;top:596px;font-size:11.5px;color:#333333;font-weight:normal;letter-spacing:-0.402px;font-family:'Liberation Sans', sans-serif;">Rows</div>
<div class="t" style="left:1217.3px;top:596px;font-size:11.5px;color:#333333;font-weight:normal;letter-spacing:-0.152px;font-family:'Liberation Sans', sans-serif;">Values</div>
<div class="r" style="left:1032px;top:678px;width:13px;height:13px;background:#ffffff;border:1px solid #7a7a7a"></div>
<div class="t" style="left:1051.1px;top:680px;font-size:11.5px;color:#333333;font-weight:normal;letter-spacing:0.104px;font-family:'Liberation Sans', sans-serif;">Defer Layout Update</div>
<div class="r" style="left:1305px;top:674px;width:47px;height:21px;background:#fdfdfd;border:1px solid #ececec"></div>
<div class="t" style="left:1309.6px;top:681px;font-size:11.5px;color:#b0b0b0;font-weight:normal;letter-spacing:0.203px;font-family:'Liberation Sans', sans-serif;">Update</div>
<div class="r" style="left:0px;top:706px;width:1366px;height:23px;background:#f3f3f3;"></div>
<div class="r" style="left:0px;top:706px;width:1366px;height:1px;background:#d0d0d0;"></div>
<div class="r" style="left:0px;top:728px;width:1366px;height:1px;background:#1e1e1e;"></div>
<div class="t" style="left:7.2px;top:712px;font-size:11.5px;color:#333333;font-weight:normal;letter-spacing:-0.6px;font-family:'Liberation Sans', sans-serif;">Ready</div>
<div class="r" style="left:1080px;top:707px;width:38px;height:21px;background:#c8c8c8;"></div>
<div class="t" style="left:1331.3px;top:712px;font-size:11.5px;color:#333333;font-weight:normal;letter-spacing:-0.6px;font-family:'Liberation Sans', sans-serif;">100%</div>
<div class="r" style="left:1209px;top:716px;width:100px;height:1px;background:#a6a6a6;"></div>
<div class="r" style="left:1257px;top:711px;width:5px;height:11px;background:#6a6a6a;"></div>
<div class="r" style="left:812px;top:708px;width:93px;height:20px;background:#ffffff;border:1px solid #767676;box-shadow:2px 2px 2px rgba(0,0,0,0.25)"></div>
<div class="t" style="left:818.2px;top:713px;font-size:11.5px;color:#333333;font-weight:normal;letter-spacing:0.284px;font-family:'Liberation Sans', sans-serif;">Microsoft Edge</div>
<div class="t" style="left:309px;top:484px;font-size:18px;color:#ff0000;font-weight:normal;letter-spacing:1.25px;font-family:'Liberation Sans', sans-serif;-webkit-text-stroke:0.45px #ff0000">This is where the</div>
<div class="t" style="left:309px;top:506px;font-size:18px;color:#ff0000;font-weight:normal;letter-spacing:1.25px;font-family:'Liberation Sans', sans-serif;-webkit-text-stroke:0.45px #ff0000">PivotTable will be</div>
<div class="t" style="left:309px;top:527px;font-size:18px;color:#ff0000;font-weight:normal;letter-spacing:1.25px;font-family:'Liberation Sans', sans-serif;-webkit-text-stroke:0.45px #ff0000">displayed</div>
<div class="t" style="left:799px;top:421px;font-size:15.5px;color:#ff0000;font-weight:normal;letter-spacing:1.75px;font-family:'Liberation Sans', sans-serif;-webkit-text-stroke:0.5px #ff0000">This is the list</div>
<div class="t" style="left:799px;top:442px;font-size:15.5px;color:#ff0000;font-weight:normal;letter-spacing:1.75px;font-family:'Liberation Sans', sans-serif;-webkit-text-stroke:0.5px #ff0000">of data fields</div>
<div class="t" style="left:799px;top:462px;font-size:15.5px;color:#ff0000;font-weight:normal;letter-spacing:1.75px;font-family:'Liberation Sans', sans-serif;-webkit-text-stroke:0.5px #ff0000">available for</div>
<div class="t" style="left:799px;top:483px;font-size:15.5px;color:#ff0000;font-weight:normal;letter-spacing:1.75px;font-family:'Liberation Sans', sans-serif;-webkit-text-stroke:0.5px #ff0000">the PivotTable</div>
<div class="t" style="left:791.8px;top:545px;font-size:18px;color:#ff0000;font-weight:normal;letter-spacing:1.25px;font-family:'Liberation Sans', sans-serif;-webkit-text-stroke:0.45px #ff0000">This is where</div>
<div class="t" style="left:791.8px;top:566px;font-size:18px;color:#ff0000;font-weight:normal;letter-spacing:1.25px;font-family:'Liberation Sans', sans-serif;-webkit-text-stroke:0.45px #ff0000">the elements of</div>
<div class="t" style="left:791.8px;top:588px;font-size:18px;color:#ff0000;font-weight:normal;letter-spacing:1.25px;font-family:'Liberation Sans', sans-serif;-webkit-text-stroke:0.45px #ff0000">the PivotTable</div>
<div class="t" style="left:791.8px;top:609px;font-size:18px;color:#ff0000;font-weight:normal;letter-spacing:1.25px;font-family:'Liberation Sans', sans-serif;-webkit-text-stroke:0.45px #ff0000">are defined</div>
<svg class="s" style="left:0;top:0" width="1366" height="729" viewBox="0 0 1366 729"><path d="M22.5 10.5h11l2 2v11h-13z" fill="none" stroke="#ffffff" stroke-width="1.6"/><rect x="25.5" y="10.5" width="7" height="4.5" fill="none" stroke="#ffffff" stroke-width="1.3"/><rect x="25" y="18.5" width="8" height="5" fill="#ffffff"/><rect x="27" y="20" width="2" height="3.5" fill="#217346"/><path d="M53 14.5h7a4.3 4.3 0 0 1 0 8.6h-2" fill="none" stroke="#ffffff" stroke-width="2"/><path d="M51 14.5l4.5-4.5M51 14.5l4.5 4.5" stroke="#ffffff" stroke-width="2" fill="none"/><path d="M70.0 15.0h5l-2.5 3z" fill="#ffffff"/><path d="M98 14.5h-7a4.3 4.3 0 0 0 0 8.6h2" fill="none" stroke="#5d9a78" stroke-width="2"/><path d="M100 14.5l-4.5-4.5M100 14.5l-4.5 4.5" stroke="#5d9a78" stroke-width="2" fill="none"/><path d="M105.0 15.0h5l-2.5 3z" fill="#5d9a78"/><text x="121" y="14.3" font-family="Liberation Sans" font-weight="bold" font-size="6.6" fill="#ffffff" textLength="13" lengthAdjust="spacingAndGlyphs">ABC</text><path d="M122.5 19.5l4 4.2l7.5-8" fill="none" stroke="#ffffff" stroke-width="2.2"/><path d="M152.5 13h8.5" stroke="#ffffff" stroke-width="1.2"/><path d="M152.8 15.2l4 4.3l4-4.3" fill="none" stroke="#ffffff" stroke-width="1.2"/><rect x="1198.5" y="10.5" width="12.5" height="9.5" fill="none" stroke="#ffffff" stroke-width="1"/><path d="M1198.5 12.5h12.5M1204.75 19.5v-5M1202.5 16.5l2.25-2.25l2.25 2.25" fill="none" stroke="#ffffff" stroke-width="1"/><path d="M1246 15.5h10" stroke="#ffffff" stroke-width="1"/><rect x="1292.5" y="12.5" width="7" height="7" fill="none" stroke="#ffffff" stroke-width="1"/><path d="M1294.5 12.5v-2h7v7h-2" fill="none" stroke="#ffffff" stroke-width="1"/><path d="M1338 10l10.5 10.5M1348.5 10l-10.5 10.5" stroke="#ffffff" stroke-width="1.1"/><circle cx="1302" cy="45.5" r="4.3" fill="none" stroke="#ffffff" stroke-width="1.1"/><path d="M1294.5 57a7.5 7.5 0 0 1 10.5-7" fill="none" stroke="#ffffff" stroke-width="1.1"/><path d="M1305 53.5h4.5M1307.25 51.2v4.6" stroke="#ffffff" stroke-width="1.1"/><path d="M794.5 52.5c0-2-2.8-3.5-2.8-6.5a5.8 5.8 0 0 1 11.6 0c0 3-2.8 4.5-2.8 6.5z" fill="none" stroke="#ffffff" stroke-width="1.1"/><path d="M794.8 54.5h5.4M795.5 56.5h4" stroke="#ffffff" stroke-width="1.1"/><rect x="17" y="75" width="24" height="25" rx="2" fill="#eac282"/><path d="M22 79v-2.5q0-2 2-2h3v-1.5q0-1.5 2-1.5t2 1.5v1.5h3q2 0 2 2v2.5z" fill="#6f6f6f"/><rect x="28" y="73" width="2" height="2" fill="#fff"/><path d="M22 79.5h14" stroke="#fff" stroke-width="1"/><path d="M31.5 83.5h8l5 5v13h-13z" fill="#ffffff" stroke="#6f6f6f" stroke-width="1"/><path d="M39.5 83.5v5h5" fill="none" stroke="#6f6f6f" stroke-width="1"/><path d="M26.0 127.0h5l-2.5 3z" fill="#6a6a6a"/><path d="M56.5 70.5l6.5 9M65 70.5l-6.5 9" stroke="#6a6a6a" stroke-width="1.7"/><circle cx="57" cy="82.3" r="2.5" fill="none" stroke="#3f7dc0" stroke-width="1.1"/><circle cx="64.8" cy="82.3" r="2.5" fill="none" stroke="#3f7dc0" stroke-width="1.1"/><path d="M53.5 94.5h5l2 2v8.5h-7z" fill="#fff" stroke="#6a6a6a" stroke-width="1"/><path d="M59.5 98.5h5.5l3 3v6h-8.5z" fill="#fff" stroke="#6a6a6a" stroke-width="1"/><path d="M55 97.5h2.5M55 99.5h3M55 101.5h3M61 102.5h3M61 104.5h5.5M61 106.5h5.5" stroke="#3f7dc0" stroke-width="1"/><path d="M110.0 99.5h5l-2.5 3z" fill="#6a6a6a"/><path d="M53 126.5l5.5-4.5l4 4l-4.5 5z" fill="#eac282"/><path d="M59 121.5l3-2.5l3.5 3.5l-2.5 3z" fill="#6f6f6f"/><path d="M63.5 118.5l2.5-2l3 3l-2 2.5z" fill="#6f6f6f"/><path d="M153.5 151.5v-6.5h6.5" fill="none" stroke="#7a7a7a" stroke-width="1"/><path d="M155.5 147.0l4.5 4.5M160.5 148.0v4h-4" fill="none" stroke="#7a7a7a" stroke-width="1"/><path d="M368.0 151.5v-6.5h6.5" fill="none" stroke="#7a7a7a" stroke-width="1"/><path d="M370.0 147.0l4.5 4.5M375.0 148.0v4h-4" fill="none" stroke="#7a7a7a" stroke-width="1"/><path d="M638.5 151.5v-6.5h6.5" fill="none" stroke="#7a7a7a" stroke-width="1"/><path d="M640.5 147.0l4.5 4.5M645.5 148.0v4h-4" fill="none" stroke="#7a7a7a" stroke-width="1"/><path d="M786.0 151.5v-6.5h6.5" fill="none" stroke="#7a7a7a" stroke-width="1"/><path d="M788.0 147.0l4.5 4.5M793.0 148.0v4h-4" fill="none" stroke="#7a7a7a" stroke-width="1"/><path d="M259.5 83.5L265.75 90.5L272 83.5" fill="none" stroke="#444" stroke-width="1.1"/><path d="M310 83.5L316.5 90.5L323 83.5" fill="none" stroke="#444" stroke-width="1.1"/><text x="333" y="92" font-family="Liberation Sans" font-size="15" fill="#595959">A</text><path d="M344.5 82h5l-2.5-3z" fill="#3f7dc0"/><text x="356" y="92" font-family="Liberation Sans" font-size="12" fill="#595959">A</text><path d="M363.5 79h5l-2.5 3z" fill="#3f7dc0"/><text x="178.5" y="121.3" font-family="Liberation Sans" font-weight="bold" font-size="12.5" fill="#444">B</text><path d="M204 112.8h5.5M201.5 120.8h5.5M206.8 112.8l-3 8" fill="none" stroke="#505050" stroke-width="1.5"/><text x="222.5" y="121" font-family="Liberation Sans" font-weight="bold" font-size="12" fill="#444">U</text><path d="M222.5 123h9" stroke="#444" stroke-width="1"/><path d="M242.5 116.0h5l-2.5 3z" fill="#6a6a6a"/><path d="M256 107.5v20M298.5 107.5v20" stroke="#c6c6c6" stroke-width="1"/><rect x="264" y="110" width="1" height="1" fill="#555"/><rect x="264" y="116" width="1" height="1" fill="#555"/><rect x="266" y="110" width="1" height="1" fill="#555"/><rect x="266" y="116" width="1" height="1" fill="#555"/><rect x="268" y="110" width="1" height="1" fill="#555"/><rect x="268" y="116" width="1" height="1" fill="#555"/><rect x="270" y="110" width="1" height="1" fill="#555"/><rect x="270" y="116" width="1" height="1" fill="#555"/><rect x="272" y="110" width="1" height="1" fill="#555"/><rect x="272" y="116" width="1" height="1" fill="#555"/><rect x="274" y="110" width="1" height="1" fill="#555"/><rect x="274" y="116" width="1" height="1" fill="#555"/><rect x="276" y="110" width="1" height="1" fill="#555"/><rect x="276" y="116" width="1" height="1" fill="#555"/><rect x="264" y="110" width="1" height="1" fill="#555"/><rect x="270" y="110" width="1" height="1" fill="#555"/><rect x="276" y="110" width="1" height="1" fill="#555"/><rect x="264" y="112" width="1" height="1" fill="#555"/><rect x="270" y="112" width="1" height="1" fill="#555"/><rect x="276" y="112" width="1" height="1" fill="#555"/><rect x="264" y="114" width="1" height="1" fill="#555"/><rect x="270" y="114" width="1" height="1" fill="#555"/><rect x="276" y="114" width="1" height="1" fill="#555"/><rect x="264" y="116" width="1" height="1" fill="#555"/><rect x="270" y="116" width="1" height="1" fill="#555"/><rect x="276" y="116" width="1" height="1" fill="#555"/><rect x="264" y="118" width="1" height="1" fill="#555"/><rect x="270" y="118" width="1" height="1" fill="#555"/><rect x="276" y="118" width="1" height="1" fill="#555"/><rect x="264" y="120" width="1" height="1" fill="#555"/><rect x="270" y="120" width="1" height="1" fill="#555"/><rect x="276" y="120" width="1" height="1" fill="#555"/><path d="M264 122.5h13" stroke="#555" stroke-width="1"/><path d="M285.0 116.0h5l-2.5 3z" fill="#6a6a6a"/><path d="M309 113l4.5-4.5l5 5l-4.5 4.5z" fill="#fff" stroke="#6a6a6a" stroke-width="1"/><path d="M312.5 109.5v-2.5" stroke="#6a6a6a" stroke-width="1"/><path d="M318.5 113.5c1.5 0.5 2.5 2 2 3.5" fill="none" stroke="#3f7dc0" stroke-width="1.5"/><rect x="306" y="121" width="16" height="4" fill="#ff0000"/><path d="M328.0 116.0h5l-2.5 3z" fill="#6a6a6a"/><text x="341.3" y="120.5" font-family="Liberation Sans" font-weight="bold" font-size="13" fill="#595959">A</text><rect x="340" y="121" width="16" height="4" fill="#000"/><path d="M362.0 116.0h5l-2.5 3z" fill="#6a6a6a"/><path d="M391 78.5H405" stroke="#6a6a6a" stroke-width="1"/><path d="M391 81.5H405" stroke="#6a6a6a" stroke-width="1"/><path d="M391 84.5H405" stroke="#6a6a6a" stroke-width="1"/><path d="M413 82.5H427" stroke="#6a6a6a" stroke-width="1"/><path d="M413 85.5H427" stroke="#6a6a6a" stroke-width="1"/><path d="M413 88.5H427" stroke="#6a6a6a" stroke-width="1"/><rect x="431" y="75" width="22" height="23" fill="#c5c5c5"/><path d="M434 87.5H448" stroke="#6a6a6a" stroke-width="1"/><path d="M434 90.5H448" stroke="#6a6a6a" stroke-width="1"/><path d="M434 93.5H448" stroke="#6a6a6a" stroke-width="1"/><path d="M457.5 76v21" stroke="#c6c6c6"/><text x="0" y="0" font-family="Liberation Sans" font-size="10.5" fill="#555" transform="translate(468.5 91) rotate(-50)">ab</text><path d="M471.5 93l9-9" stroke="#555" stroke-width="1"/><path d="M477 83.3h4v4" fill="none" stroke="#555" stroke-width="1"/><path d="M485.0 84.5h5l-2.5 3z" fill="#6a6a6a"/><path d="M510.5 74v54" stroke="#c6c6c6"/><text x="519.5" y="86.3" font-family="Liberation Sans" font-size="10" fill="#555" letter-spacing="-0.3">ab</text><text x="519.5" y="93.5" font-family="Liberation Sans" font-size="10" fill="#555">c</text><path d="M530 88.5v2.2h-3.5M528 89l-1.7 1.7l1.7 1.7" fill="none" stroke="#3f7dc0" stroke-width="1"/><path d="M391 112.5H405" stroke="#6a6a6a" stroke-width="1"/><path d="M391 118.5H405" stroke="#6a6a6a" stroke-width="1"/><path d="M391 115.5H401" stroke="#6a6a6a" stroke-width="1"/><path d="M391 121.5H401" stroke="#6a6a6a" stroke-width="1"/><path d="M413 112.5H427" stroke="#6a6a6a" stroke-width="1"/><path d="M413 118.5H427" stroke="#6a6a6a" stroke-width="1"/><path d="M415 115.5H425" stroke="#6a6a6a" stroke-width="1"/><path d="M415 121.5H425" stroke="#6a6a6a" stroke-width="1"/><path d="M434 112.5H448" stroke="#6a6a6a" stroke-width="1"/><path d="M434 118.5H448" stroke="#6a6a6a" stroke-width="1"/><path d="M438 115.5H448" stroke="#6a6a6a" stroke-width="1"/><path d="M438 121.5H448" stroke="#6a6a6a" stroke-width="1"/><path d="M457.5 107v21" stroke="#c6c6c6"/><path d="M465 110.5H481" stroke="#6a6a6a" stroke-width="1"/><path d="M465 122.5H481" stroke="#6a6a6a" stroke-width="1"/><path d="M473 113.5H481" stroke="#6a6a6a" stroke-width="1"/><path d="M473 116.5H481" stroke="#6a6a6a" stroke-width="1"/><path d="M473 119.5H481" stroke="#6a6a6a" stroke-width="1"/><path d="M465 116.5l3.5-3.3v6.6z" fill="#3f7dc0"/><path d="M467 116.5h5" stroke="#3f7dc0" stroke-width="2"/><path d="M487 110.5H503" stroke="#6a6a6a" stroke-width="1"/><path d="M487 122.5H503" stroke="#6a6a6a" stroke-width="1"/><path d="M495 113.5H503" stroke="#6a6a6a" stroke-width="1"/><path d="M495 116.5H503" stroke="#6a6a6a" stroke-width="1"/><path d="M495 119.5H503" stroke="#6a6a6a" stroke-width="1"/><path d="M494 116.5l-3.5-3.3v6.6z" fill="#3f7dc0"/><path d="M487 116.5h5" stroke="#3f7dc0" stroke-width="2"/><rect x="518.5" y="109.5" width="14" height="14" fill="#fff" stroke="#666"/><path d="M518.5 112.5h14M518.5 120.5h14M525.5 109.5v3M525.5 120.5v3" stroke="#666"/><path d="M521.5 116.5h8" stroke="#3f7dc0" stroke-width="1"/><path d="M520.3 116.5l2.2-1.8v3.6zM530.7 116.5l-2.2-1.8v3.6z" fill="#3f7dc0"/><path d="M632.0 116.0h5l-2.5 3z" fill="#6a6a6a"/><path d="M772 84L778.5 91L785 84" fill="none" stroke="#444" stroke-width="1.1"/><text x="665.5" y="122.5" font-family="Liberation Sans" font-size="16" fill="#595959" transform="translate(665.5 0) scale(0.8 1) translate(-665.5 0)">$</text><path d="M683.0 116.0h5l-2.5 3z" fill="#6a6a6a"/><text x="697" y="123" font-family="Liberation Sans" font-size="14.5" fill="#595959">%</text><circle cx="724.8" cy="115.2" r="2.1" fill="#595959"/><path d="M726.7 115.4c0 2-1.2 3.6-3.4 4.4" fill="none" stroke="#595959" stroke-width="1.3"/><path d="M740.5 107v21" stroke="#c6c6c6"/><text x="754.5" y="115.5" font-family="Liberation Sans" font-size="8.2" fill="#444">.0</text><text x="750" y="123" font-family="Liberation Sans" font-size="8.2" fill="#444">.00</text><path d="M748.8 113.5h6M751.3 111l-2.5 2.5l2.5 2.5" fill="none" stroke="#3f7dc0" stroke-width="1.3"/><text x="772.3" y="115.5" font-family="Liberation Sans" font-size="8.2" fill="#444">.00</text><text x="776.5" y="123" font-family="Liberation Sans" font-size="8.2" fill="#444">.0</text><path d="M770.5 120.5h6M774 118l2.5 2.5l-2.5 2.5" fill="none" stroke="#3f7dc0" stroke-width="1.3"/><rect x="827.5" y="72.5" width="27" height="24" fill="#fff" stroke="#7a7a7a"/><path d="M827.5 78.5h27M827.5 84.5h27M827.5 90.5h27M834.5 72.5v24M847.5 72.5v24" stroke="#7a7a7a"/><rect x="835" y="73" width="6" height="5" fill="#e05f35"/><rect x="835" y="79" width="11" height="5" fill="#3f7dc0"/><rect x="835" y="85" width="9" height="5" fill="#e05f35"/><rect x="835" y="91" width="4" height="5" fill="#3f7dc0"/><rect x="841.5" y="89.5" width="15" height="12" fill="#fff" stroke="#7a7a7a"/><path d="M845.5 94.5h7M845.5 97.5h7M851 92l-4 8" stroke="#444" stroke-width="1"/><rect x="892.5" y="74.5" width="24.5" height="20" fill="#fff" stroke="#7a7a7a"/><rect x="899" y="80" width="18" height="14.5" fill="#c5d7ec"/><path d="M892.5 79.5h24.5M892.5 84.5h24.5M892.5 89.5h24.5M898.5 74.5v20M904.5 74.5v20M910.5 74.5v20" stroke="#8a8a8a"/><path d="M910.5 93L920.5 81.5" stroke="#7f7f7f" stroke-width="4.2" stroke-linecap="butt"/><path d="M899 101.8c1-4 3.5-7.5 7.5-9l3.3 3.3c-1.5 4-5 6-10.8 5.7z" fill="#3f7dc0"/><path d="M907.3 94.5l2 2c-0.8 1.2-1.7 1.6-2.8 1.5z" fill="#fff"/><rect x="942.5" y="72.5" width="25.5" height="21.5" fill="#fff" stroke="#7a7a7a"/><rect x="948" y="78" width="13.5" height="9.5" fill="#c5d7ec"/><path d="M942.5 77.5h25.5M942.5 87.5h25.5M947.5 72.5v21.5M961.5 72.5v21.5" stroke="#8a8a8a"/><path d="M960.5 91L970.5 79.5" stroke="#7f7f7f" stroke-width="4.2" stroke-linecap="butt"/><path d="M949 99.8c1-4 3.5-7.5 7.5-9l3.3 3.3c-1.5 4-5 6-10.8 5.7z" fill="#3f7dc0"/><path d="M957.3 92.5l2 2c-0.8 1.2-1.7 1.6-2.8 1.5z" fill="#fff"/><path d="M869.0 127.0h5l-2.5 3z" fill="#6a6a6a"/><path d="M918.5 127.0h5l-2.5 3z" fill="#6a6a6a"/><path d="M969.0 127.0h5l-2.5 3z" fill="#6a6a6a"/><g stroke="#b7b7b7" fill="#f5f1f5"><rect x="1001.5" y="72.5" width="14" height="5"/><path d="M1008.5 72.5v5"/><rect x="1012.5" y="80.5" width="14" height="5"/><path d="M1019.5 80.5v5"/><rect x="1001.5" y="88.5" width="14" height="10"/><path d="M1001.5 93.5h14M1008.5 88.5v10"/></g><path d="M1003 83h7M1003 83l3-2.5v5z" stroke="#b7b7b7" fill="#b7b7b7" stroke-width="1.3"/><path d="M1011.0 127.0h5l-2.5 3z" fill="#6a6a6a"/><g stroke="#6a6a6a" fill="#fff"><rect x="1042.5" y="72.5" width="14" height="5"/><path d="M1049.5 72.5v5"/><rect x="1042.5" y="89.5" width="14" height="10"/><path d="M1042.5 94.5h14M1049.5 89.5v10"/></g><rect x="1048.5" y="80.5" width="7" height="5" fill="#c5d7ec" stroke="#6a6a6a"/><path d="M1056 78l10.5 9.5M1067 77.5l-10 11" stroke="#e05f35" stroke-width="2"/><path d="M1053.0 127.0h5l-2.5 3z" fill="#6a6a6a"/><path d="M1084.5 71v4M1111.5 71v4M1085 73h26M1085 73l3-2v4zM1111 73l-3-2v4z" stroke="#3f7dc0" fill="#3f7dc0" stroke-width="1"/><rect x="1084.5" y="77.5" width="27" height="20" fill="#fff" stroke="#7a7a7a"/><path d="M1084.5 82.5h27M1084.5 92.5h27M1091.5 77.5v20M1099.5 77.5v20M1106.5 77.5v20" stroke="#8a8a8a"/><rect x="1092" y="83" width="7" height="9" fill="#3f7dc0"/><path d="M1084.5 97.5v4h8l2-4M1094.5 101.5h7l2-4" fill="none" stroke="#7a7a7a"/><path d="M1096.0 127.0h5l-2.5 3z" fill="#6a6a6a"/><path d="M1140 71.2h13.5v2.5M1140 71.2l6.3 6.8l-6.3 6.8h13.5v-2.5" fill="none" stroke="#444" stroke-width="2.4"/><path d="M1218.0 77.0h5l-2.5 3z" fill="#6a6a6a"/><rect x="1140.5" y="94.5" width="13" height="14" fill="#fff" stroke="#6a6a6a"/><rect x="1140" y="94" width="14" height="3" fill="#6a6a6a"/><path d="M1147 98.5v7M1144 103l3 3l3-3" fill="none" stroke="#3f7dc0" stroke-width="1.6"/><path d="M1176.0 100.0h5l-2.5 3z" fill="#6a6a6a"/><path d="M1141 125l7-7.5l5 4.5l-7 7.5z" fill="#e67f93"/><path d="M1141 125l3-3.2l5 4.5l-3 3.3z" fill="#f2b3c0"/><path d="M1188.0 123.0h5l-2.5 3z" fill="#6a6a6a"/><text x="1233.6" y="84.5" font-family="Liberation Sans" font-weight="bold" font-size="14.5" fill="#b4b4b4">A</text><text x="1234.2" y="98.6" font-family="Liberation Sans" font-weight="bold" font-size="14.5" fill="#b4b4b4">Z</text><path d="M1246.5 79.5h16.5l-6 6.5v9h-3.5v-9z" fill="#b4b4b4"/><path d="M1254.3 87v6.5h1v-6.5z" fill="#f3f3f3"/><path d="M1261.0 127.0h5l-2.5 3z" fill="#bdbdbd"/><circle cx="1294.6" cy="81.6" r="8.6" fill="#fff" stroke="#3f7dc0" stroke-width="2.5"/><path d="M1288.3 88.3l-7.8 8.5" stroke="#3f7dc0" stroke-width="3.6" stroke-linecap="round"/><path d="M1306.0 127.0h5l-2.5 3z" fill="#6a6a6a"/><path d="M1347.5 151.5l5-4.5l5 4.5" fill="none" stroke="#444" stroke-width="1"/><path d="M92.5 177.5h7l-3.5 4z" fill="#6a6a6a"/><circle cx="122" cy="176" r="0.9" fill="#9a9a9a"/><circle cx="122" cy="180" r="0.9" fill="#9a9a9a"/><circle cx="122" cy="184" r="0.9" fill="#9a9a9a"/><path d="M150.5 175l10 10M160.5 175l-10 10" stroke="#b4b4b4" stroke-width="1.6"/><path d="M186.5 180l4 4l8-8.5" fill="none" stroke="#c8c8c8" stroke-width="2.4"/><text x="222" y="184.5" font-family="Liberation Serif" font-style="italic" font-weight="bold" font-size="13" fill="#6a6a6a">f</text><text x="227.5" y="184.5" font-family="Liberation Serif" font-style="italic" font-weight="bold" font-size="10" fill="#6a6a6a">x</text><path d="M1349.5 180.5l3-3l3 3" fill="none" stroke="#6a6a6a" stroke-width="1.5"/><path d="M11 239h11v-11z" fill="#c2c2c2"/><path d="M1002.0 234.5h7l-3.5 -4z" fill="#6a6a6a"/><path d="M1002.0 669.5h7l-3.5 4z" fill="#6a6a6a"/><path d="M635.5 689.0v7l-4 -3.5z" fill="#6a6a6a"/><path d="M985.5 689.0v7l4 -3.5z" fill="#6a6a6a"/><path d="M31.0 687.5v8l-4 -4.0z" fill="#c0c0c0"/><path d="M56.0 687.5v8l4 -4.0z" fill="#217346"/><circle cx="581" cy="692" r="7.3" fill="none" stroke="#7a7a7a" stroke-width="1.1"/><path d="M577 692h8M581 688v8" stroke="#7a7a7a" stroke-width="1.5"/><circle cx="610" cy="686.5" r="0.9" fill="#a0a0a0"/><circle cx="610" cy="691.5" r="0.9" fill="#a0a0a0"/><circle cx="610" cy="696.5" r="0.9" fill="#a0a0a0"/><path d="M1296.0 243.5h9l-4.5 5z" fill="#6a6a6a"/><path d="M1337.5 241.5l9.5 9.5M1347 241.5l-9.5 9.5" stroke="#555" stroke-width="1.9"/><circle cx="1324.5" cy="282.6" r="5" fill="none" stroke="#8c8c8c" stroke-width="3.2" stroke-dasharray="2.6 1.33"/><circle cx="1324.5" cy="282.6" r="3.6" fill="none" stroke="#8c8c8c" stroke-width="2.4"/><path d="M1339.9 281.0h7l-3.5 4z" fill="#6a6a6a"/><circle cx="1344.6" cy="318.3" r="4.1" fill="none" stroke="#3f7dc0" stroke-width="1.8"/><path d="M1341.6 321.5l-4.3 4.3" stroke="#3f7dc0" stroke-width="2.6" stroke-linecap="round"/><path d="M1340.0 357.5h7l-3.5 -4z" fill="#6a6a6a"/><path d="M1340.0 452.5h7l-3.5 4z" fill="#6a6a6a"/><path d="M1031.5 480.5H1356" stroke="#b0b0b0" stroke-width="1" stroke-dasharray="1 2"/><path d="M1036.5 519.5h11l-4 4.5v6h-3v-6z" fill="#8a8a8a"/><path d="M1199 519.5v10M1202 519.5v10M1204.5 519.5v10M1207 519.5v10" stroke="#8a8a8a" stroke-width="1"/><rect x="1198.5" y="519.5" width="2.5" height="10" fill="#8a8a8a"/><path d="M1036.5 595.5h11M1036.5 598.5h11M1036.5 601h11M1036.5 603.5h11" stroke="#8a8a8a" stroke-width="1"/><path d="M1208.5 597.5v-1.5h-8.5l4 4l-4 4h8.5v-1.5" fill="none" stroke="#8a8a8a" stroke-width="1.3"/><circle cx="61.5" cy="713" r="3" fill="#7a7a7a"/><rect x="60.5" y="713.5" width="10.5" height="9" fill="#fff" stroke="#7a7a7a"/><path d="M62 716.5h8M62 719h8M64.5 715v7M67 715v7" stroke="#7a7a7a" stroke-width="0.8"/><rect x="1092.5" y="711.5" width="12" height="11" fill="none" stroke="#6a6a6a"/><path d="M1092.5 715.5h12M1092.5 719h12M1096.5 711.5v11M1100.5 711.5v11" stroke="#6a6a6a"/><rect x="1130.5" y="711.5" width="13" height="11" fill="none" stroke="#6a6a6a"/><rect x="1133.5" y="713.5" width="7" height="7" fill="none" stroke="#6a6a6a"/><path d="M1135 715.5h4M1135 717.5h4" stroke="#6a6a6a" stroke-width="0.8"/><rect x="1168.5" y="711.5" width="13" height="11" fill="none" stroke="#6a6a6a"/><path d="M1168.5 716.5h8M1172.5 711.5v5M1176.5 711.5v5" fill="none" stroke="#6a6a6a"/><path d="M1199.5 716.5h5" stroke="#555" stroke-width="2"/><path d="M1312.5 716.5h7M1316 713v7" stroke="#555" stroke-width="1.6"/><rect x="45" y="447" width="63" height="53" fill="#c5d7ec"/><rect x="45" y="447" width="63" height="8" fill="#4f81bd"/><rect x="45" y="447" width="13" height="53" fill="#4f81bd"/><path d="M58.5 447v53M45 455.5h63" stroke="#fff" stroke-width="1"/><path d="M48 451h7M62 451h7M74 451h7M86 451h7M98 451h7" stroke="#fff" stroke-width="1.6"/><path d="M48 460h7" stroke="#fff" stroke-width="1.6"/><path d="M62 460h7M74 460h7M86 460h7M98 460h7" stroke="#7f7f7f" stroke-width="1.6"/><path d="M48 466h7" stroke="#fff" stroke-width="1.6"/><path d="M62 466h7M74 466h7M86 466h7M98 466h7" stroke="#7f7f7f" stroke-width="1.6"/><path d="M48 472h7" stroke="#fff" stroke-width="1.6"/><path d="M62 472h7M74 472h7M86 472h7M98 472h7" stroke="#7f7f7f" stroke-width="1.6"/><path d="M48 478h7" stroke="#fff" stroke-width="1.6"/><path d="M62 478h7M74 478h7M86 478h7M98 478h7" stroke="#7f7f7f" stroke-width="1.6"/><path d="M48 484h7" stroke="#fff" stroke-width="1.6"/><path d="M62 484h7M74 484h7M86 484h7M98 484h7" stroke="#7f7f7f" stroke-width="1.6"/><path d="M48 490h7" stroke="#fff" stroke-width="1.6"/><path d="M62 490h7M74 490h7M86 490h7M98 490h7" stroke="#7f7f7f" stroke-width="1.6"/><path d="M48 496h7" stroke="#fff" stroke-width="1.6"/><path d="M62 496h7M74 496h7M86 496h7M98 496h7" stroke="#7f7f7f" stroke-width="1.6"/><rect x="149" y="447" width="69" height="151" fill="#c5d7ec"/><rect x="156" y="455" width="41" height="3" fill="#4f81bd"/><rect x="155.5" y="464.5" width="56" height="54" fill="#fff" stroke="#9ab5d8"/><path d="M164 471.5h42" stroke="#a6a6a6" stroke-width="1.5"/><path d="M164 476.5h42" stroke="#a6a6a6" stroke-width="1.5"/><path d="M164 481.5h42" stroke="#a6a6a6" stroke-width="1.5"/><path d="M164 486.5h42" stroke="#a6a6a6" stroke-width="1.5"/><path d="M164 491.5h42" stroke="#a6a6a6" stroke-width="1.5"/><path d="M164 496.5h42" stroke="#a6a6a6" stroke-width="1.5"/><path d="M164 501.5h42" stroke="#a6a6a6" stroke-width="1.5"/><path d="M164 506.5h42" stroke="#a6a6a6" stroke-width="1.5"/><path d="M164 511.5h42" stroke="#a6a6a6" stroke-width="1.5"/><rect x="159.5" y="470.5" width="2" height="2" fill="#8a8a8a"/><rect x="159.5" y="475.5" width="2" height="2" fill="#8a8a8a"/><rect x="156" y="525" width="41" height="3" fill="#4f81bd"/><rect x="155.5" y="534.5" width="25" height="23" fill="#fff" stroke="#9ab5d8"/><rect x="186.5" y="534.5" width="25" height="23" fill="#fff" stroke="#9ab5d8"/><rect x="155.5" y="563.5" width="25" height="23" fill="#fff" stroke="#9ab5d8"/><rect x="186.5" y="563.5" width="25" height="23" fill="#fff" stroke="#9ab5d8"/><circle cx="144.5" cy="507.5" r="31.5" fill="#fff" stroke="#bcd0e8" stroke-width="1"/><clipPath id="cc"><circle cx="144.5" cy="507.5" r="31"/></clipPath><g clip-path="url(#cc)"><rect x="144" y="487" width="40" height="6" fill="#a6a6a6"/><rect x="144" y="504.5" width="40" height="6" fill="#a6a6a6"/><rect x="144" y="522" width="40" height="6" fill="#a6a6a6"/></g><rect x="128.5" y="484.5" width="12" height="12" fill="#fff" stroke="#7a7a7a" stroke-width="1"/><rect x="128.5" y="501.5" width="12" height="12" fill="#fff" stroke="#7a7a7a" stroke-width="1"/><rect x="128.5" y="518.5" width="12" height="12" fill="#fff" stroke="#7a7a7a" stroke-width="1"/><path d="M131 507.5l2.5 3l5-5.5" fill="none" stroke="#e05f35" stroke-width="1.6"/><path d="M297.5 488.5L203.3 424.1" stroke="#ff0000" stroke-width="2.6" stroke-linecap="round"/><path d="M195 418.5L208.0 420.7L201.8 429.8z" fill="#ff0000"/><path d="M939 430.5L1014.2 399.8" stroke="#ff0000" stroke-width="2.6" stroke-linecap="round"/><path d="M1023.5 396L1014.5 405.6L1010.3 395.4z" fill="#ff0000"/><path d="M922.5 554.5L1026.0 554.5" stroke="#ff0000" stroke-width="2.6" stroke-linecap="round"/><path d="M1036 554.5L1024.0 560.0L1024.0 549.0z" fill="#ff0000"/></svg>
</body></html>
